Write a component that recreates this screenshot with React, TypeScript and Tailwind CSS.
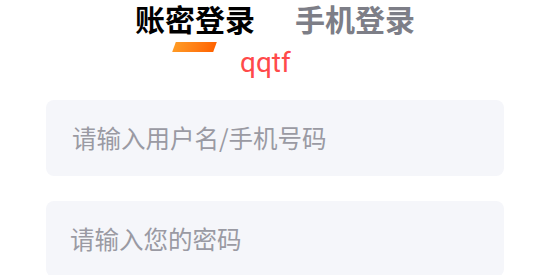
import React from "react";

const cjk = { fontFamily: '"Noto Sans CJK SC", "Noto Sans", sans-serif' };

export default function App() {
  return (
    <div className="w-[550px] h-[275px] overflow-hidden bg-white" style={cjk}>
      <div className="flex justify-center gap-10 pt-px">
        <span className="text-[30px] leading-[34px] font-bold text-black">账密登录</span>
        <span className="text-[30px] leading-[34px] font-bold text-[#7d7e87]">手机登录</span>
      </div>
      <div className="relative h-[65px]">
        <div className="absolute left-[174px] top-[7px] w-[41px] h-[10px] -skew-x-[20deg] bg-gradient-to-r from-[#ff9a24] to-[#ff6200]" />
        <span
          className="absolute left-[240px] top-[12px] text-[28px] leading-[32px] text-[#ff4a4a]"
          style={{ fontFamily: 'Roboto, "Noto Sans", sans-serif' }}
        >
          qqtf
        </span>
      </div>
      <div className="px-[46px] flex flex-col gap-[25px]">
        <div className="h-[76px] rounded-lg bg-[#f5f6fa] flex items-center pl-[26px]">
          <span className="text-[24.5px] text-[#9a9aa3]">请输入用户名/手机号码</span>
        </div>
        <div className="h-[76px] rounded-lg bg-[#f5f6fa] flex items-center pl-[24px]">
          <span className="text-[24.5px] text-[#9a9aa3]">请输入您的密码</span>
        </div>
      </div>
    </div>
  );
}
